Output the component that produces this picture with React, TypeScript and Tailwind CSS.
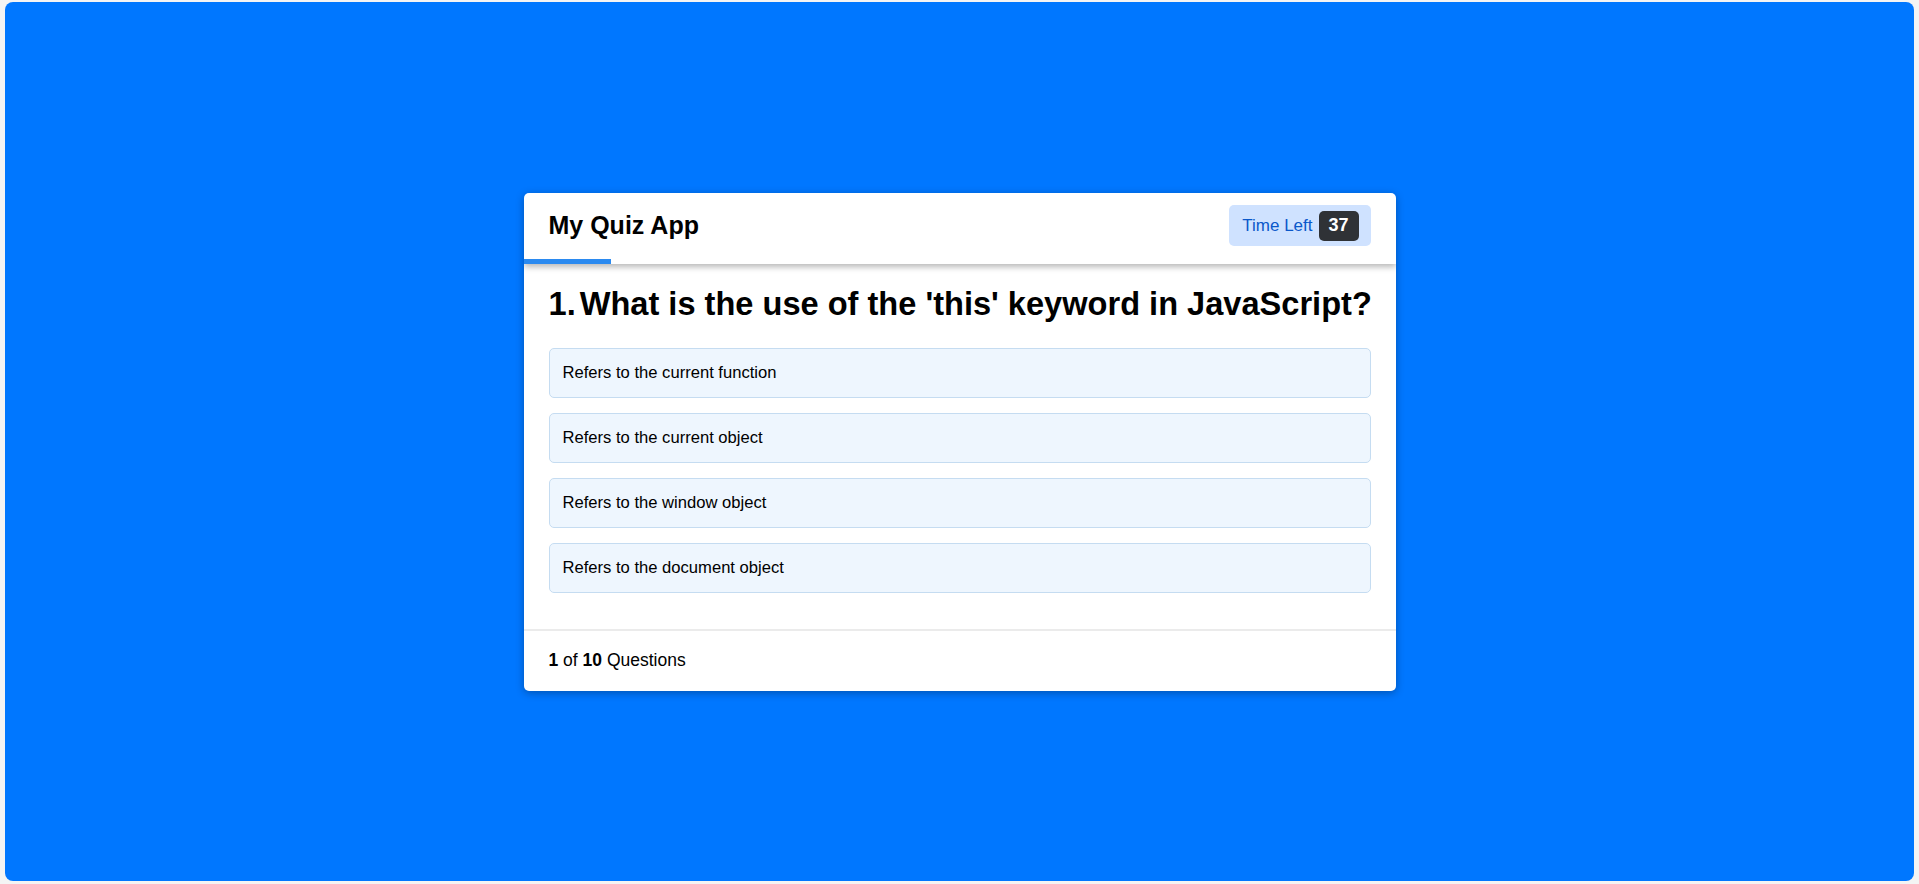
import { useState } from 'react'

// ─── Data ────────────────────────────────────────────────────────────────────

const QUESTION = {
  number: 1,
  text: "What is the use of the 'this' keyword in JavaScript?",
  options: [
    'Refers to the current function',
    'Refers to the current object',
    'Refers to the window object',
    'Refers to the document object',
  ],
}

const TOTAL = 10

// ─── Component ───────────────────────────────────────────────────────────────

export default function App() {
  const [timeLeft] = useState(37)
  const [selected, setSelected] = useState<number | null>(null)
  const progress = (QUESTION.number / TOTAL) * 100

  return (
    <div className="h-[884px] w-full bg-[#f4f4f4] px-[5px] pt-[2px] pb-[3px] font-['Liberation_Sans',Arial,sans-serif] text-black">
      <div className="flex h-full w-full items-center justify-center rounded-lg bg-[#0077ff]">
        <div className="w-[872px] overflow-hidden rounded-[5px] bg-white shadow-[0_2px_8px_rgba(0,0,0,0.3)]">
          {/* Header */}
          <div className="relative z-10 shadow-[0_3px_6px_rgba(0,0,0,0.28)]">
            <div className="flex h-[66px] items-center justify-between px-[25px]">
              <h1 className="text-[25px] font-bold">My Quiz App</h1>
              <div className="flex h-[41px] items-center gap-[6px] rounded-[5px] bg-[#cfe2ff] pl-[13px] pr-[12px] text-[17px] text-[#0a58ca]">
                <span>Time Left</span>
                <span className="flex h-[30px] w-[40px] items-center justify-center rounded-[5px] bg-[#2f3236] text-[18px] font-bold text-white">
                  {timeLeft}
                </span>
              </div>
            </div>
            <div className="h-[5px] w-full bg-white">
              <div className="h-full bg-[#2b8af0]" style={{ width: `${progress}%` }} />
            </div>
          </div>

          {/* Body */}
          <div className="px-[25px] pt-[20px] pb-[36px]">
            <h2 className="mb-[25px] flex gap-[4px] whitespace-nowrap text-[32.6px] leading-[39px] font-bold">
              <span>{QUESTION.number}.</span>
              <span>{QUESTION.text}</span>
            </h2>
            <ul className="flex flex-col gap-[15px]">
              {QUESTION.options.map((opt, i) => (
                <li
                  key={opt}
                  onClick={() => setSelected(i)}
                  className={
                    'flex h-[50px] cursor-pointer items-center rounded-[5px] border px-[13px] pt-px text-[16.6px] ' +
                    (selected === i ? 'border-[#8fbfec] bg-[#dcecfc]' : 'border-[#c5dcf1] bg-[#eef6fe]')
                  }
                >
                  {opt}
                </li>
              ))}
            </ul>
          </div>

          {/* Footer */}
          <div className="flex h-[62px] items-center border-t-2 border-[#ebebeb] px-[25px] text-[17.5px]">
            <span>
              <b>{QUESTION.number}</b> of <b>{TOTAL}</b> Questions
            </span>
          </div>
        </div>
      </div>
    </div>
  )
}
